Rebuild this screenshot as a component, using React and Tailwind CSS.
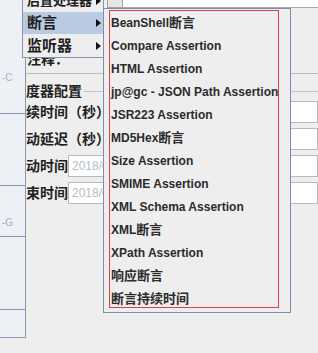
import React from "react";

const assertions = [
    { en: "BeanShell", zh: "断言" },
    { en: "Compare Assertion" },
    { en: "HTML Assertion" },
    { en: "jp@gc - JSON Path Assertion" },
    { en: "JSR223 Assertion" },
    { en: "MD5Hex", zh: "断言" },
    { en: "Size Assertion" },
    { en: "SMIME Assertion" },
    { en: "XML Schema Assertion" },
    { en: "XML", zh: "断言" },
    { en: "XPath Assertion" },
    { zh: "响应断言" },
    { zh: "断言持续时间" },
];

const leftMenu = [
    { label: "后置处理器", h: "h-[23px]", size: "text-[13px]" },
    { label: "断言", h: "h-[22px]", size: "text-[15px]", active: true },
    { label: "监听器", h: "h-[23px]", size: "text-[15px]" },
];

const fields = [
    { label: "持续时间（秒）", value: "" },
    { label: "启动延迟（秒）", value: "" },
    { label: "启动时间", value: "2018/08/14 10:25:36" },
    { label: "结束时间", value: "2018/08/14 10:25:36" },
];

function Arrow() {
    return (
        <svg width="5" height="8" viewBox="0 0 5 8" className="shrink-0">
            <polygon points="0,0 5,4 0,8" fill="#111" />
        </svg>
    );
}

export default function App() {
    const cjk = "font-['Liberation_Sans','Noto_Sans_CJK_SC',sans-serif]";
    return (
        <div className={`relative w-[318px] h-[353px] overflow-hidden bg-[#eeeeee] flex ${cjk}`}>
            {/* tree strip on the left */}
            <div className="w-[26px] shrink-0 flex flex-col">
                <div className="h-[114px] bg-[#edf0f5] border-r border-b border-[#8797b2] pt-[71px] pl-[2px] text-[10px] leading-[14px] text-[#9fb0c4]">-C</div>
                <div className="h-[72px] bg-[#edf0f5] border-r border-b border-[#8797b2]" />
                <div className="h-[51px] bg-[#edf0f5] border-r border-b border-[#8797b2] pt-[30px] pl-[2px] text-[10px] leading-[14px] text-[#9fb0c4]">-G</div>
                <div className="h-[73px] bg-[#edf0f5] border-r border-b border-[#8797b2]" />
                <div className="h-[28px] bg-[#edf0f5] border-r border-b border-[#8797b2]" />
            </div>

            {/* main settings panel */}
            <div className="flex-1 flex flex-col overflow-hidden">
                <div className="h-[8px] flex pl-[81px]">
                    <div className="w-[16px] bg-[#e6e6e6] border-x border-b border-[#a2a2a2]" />
                    <div className="flex-1 bg-white border-b border-[#a8a8a8]" />
                </div>
                <div className="h-[66px] border-b border-[#bdbdbd] pt-[43px] pl-[1px] text-[14px] leading-[16px] font-bold text-[#222]">注释：</div>
                <div className="mt-[8px] h-[18px] flex items-center -ml-[14px]">
                    <span className="text-[14px] font-bold leading-[18px] text-[#222]">调度器配置</span>
                    <div className="flex-1 h-px bg-[#c4c4c4] ml-[2px]" />
                </div>
                <div className="mt-[1px] flex flex-col gap-[5px] -ml-[14px]">
                    {fields.map((f, i) => (
                        <div key={i} className="h-[22px] flex items-center">
                            <span className="text-[14px] font-bold leading-[18px] text-[#222] whitespace-nowrap">{f.label}</span>
                            <div className="flex-1 h-full bg-white border border-[#b9b9b9] flex items-center pl-[3px] text-[12px] text-[#b4bcc6] whitespace-nowrap overflow-hidden">
                                {f.value}
                            </div>
                        </div>
                    ))}
                </div>
            </div>

            {/* first level popup */}
            <div className="absolute left-[22px] top-[-12px] w-[82px] bg-[#eeeeee] border border-[#8494b0] flex flex-col">
                {leftMenu.map((m, i) => (
                    <div key={i} className={`${m.h} flex items-center justify-between pl-[4px] pr-[2px] ${m.active ? "bg-[#b9cbe0]" : ""}`}>
                        <span className={`${m.size} font-bold leading-[18px] text-[#1e1e1e] whitespace-nowrap`}>{m.label}</span>
                        <Arrow />
                    </div>
                ))}
            </div>

            {/* assertion submenu */}
            <div className="absolute left-[103px] top-[8px] w-[188px] h-[305px] bg-[#eeeeee] border border-[#7b8cae] pt-[2px] flex flex-col">
                {assertions.map((a, i) => (
                    <div key={i} className="h-[23px] shrink-0 flex items-center pl-[7px] text-[12px] font-bold text-[#2b2b2b] whitespace-nowrap">
                        {a.en && <span>{a.en}</span>}
                        {a.zh && <span className="text-[13px]">{a.zh}</span>}
                    </div>
                ))}
            </div>

            {/* red highlight frame */}
            <div className="absolute left-[109px] top-[10px] w-[170px] h-[298px] border border-[#dc3d52]" />
        </div>
    );
}
